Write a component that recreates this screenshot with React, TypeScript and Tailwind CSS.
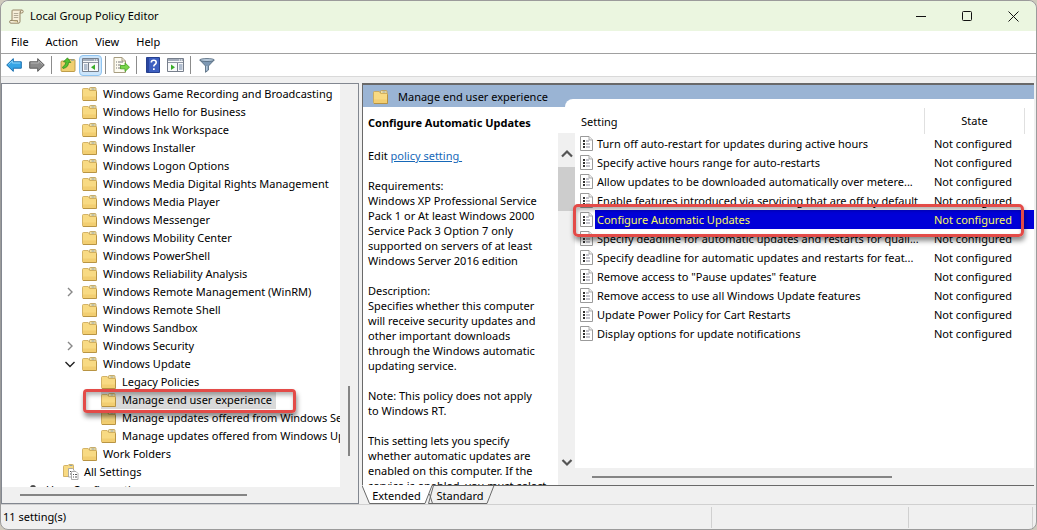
import React from 'react';

interface TreeItem {
  label: string;
  level: number;
  chevron?: 'open' | 'closed';
  icon?: 'all' | 'user';
  selected?: boolean;
}

const treeItems: TreeItem[] = [
  { label: 'Windows Game Recording and Broadcasting', level: 3 },
  { label: 'Windows Hello for Business', level: 3 },
  { label: 'Windows Ink Workspace', level: 3 },
  { label: 'Windows Installer', level: 3 },
  { label: 'Windows Logon Options', level: 3 },
  { label: 'Windows Media Digital Rights Management', level: 3 },
  { label: 'Windows Media Player', level: 3 },
  { label: 'Windows Messenger', level: 3 },
  { label: 'Windows Mobility Center', level: 3 },
  { label: 'Windows PowerShell', level: 3 },
  { label: 'Windows Reliability Analysis', level: 3 },
  { label: 'Windows Remote Management (WinRM)', level: 3, chevron: 'closed' },
  { label: 'Windows Remote Shell', level: 3 },
  { label: 'Windows Sandbox', level: 3 },
  { label: 'Windows Security', level: 3, chevron: 'closed' },
  { label: 'Windows Update', level: 3, chevron: 'open' },
  { label: 'Legacy Policies', level: 4 },
  { label: 'Manage end user experience', level: 4, selected: true },
  { label: 'Manage updates offered from Windows Server Update Service', level: 4 },
  { label: 'Manage updates offered from Windows Update', level: 4 },
  { label: 'Work Folders', level: 3 },
  { label: 'All Settings', level: 2, icon: 'all' },
  { label: 'User Configuration', level: 0, icon: 'user', chevron: 'open' },
];

const levelPadding = ['pl-[5px]', 'pl-[24px]', 'pl-[43px]', 'pl-[62px]', 'pl-[81px]'];

const settings = [
  'Turn off auto-restart for updates during active hours',
  'Specify active hours range for auto-restarts',
  'Allow updates to be downloaded automatically over metere...',
  'Enable features introduced via servicing that are off by default',
  'Configure Automatic Updates',
  'Specify deadline for automatic updates and restarts for quali...',
  'Specify deadline for automatic updates and restarts for feat...',
  'Remove access to "Pause updates" feature',
  'Remove access to use all Windows Update features',
  'Update Power Policy for Cart Restarts',
  'Display options for update notifications',
];

const FolderIcon = () => (
  <svg width="15" height="14" viewBox="0 0 15 14" className="shrink-0">
    <path d="M7.500 3.500V1.500q0-1 1-1H13q1 0 1 1V5H7.500z" fill="#f3dfa0" stroke="#b99a52" strokeWidth=".8" />
    <path d="M9.500 2h3" stroke="#8fa3ad" strokeWidth="1" />
    <path d="M.5 2.500q0-1 1-1h4.700L7.800 3.500H14q.5 0 .5.700v8.400q0 .9-1 .9h-12q-1 0-1-.9z" fill="#f8da83" stroke="#c9a452" strokeWidth=".8" />
    <path d="M1 9.500h13v3.500H1z" fill="#efc766" opacity=".6" />
    <path d="M14.500 4.500v9H1" fill="none" stroke="#b18b3a" strokeWidth=".8" />
  </svg>
);

const AllSettingsIcon = () => (
  <svg width="16" height="16" viewBox="0 0 16 16" className="shrink-0">
    <path d="M.5 2.500q0-1 1-1h3.400l1-1H9.500q1 0 1 1v11H.5z" fill="#f8da83" stroke="#c9a452" strokeWidth=".8" />
    <path d="M6.500 1.500h3" stroke="#8fa3ad" />
    <path d="M5.500 4.500h4L11 6v7H5.500z" fill="#fff" stroke="#999" strokeWidth=".8" />
    <path d="M8.500 7.500H13l2 2v6H8.500z" fill="#fff" stroke="#999" strokeWidth=".8" />
    <path d="M10 10.500h1M12 10.500h2M10 13h1M12 13h2M7 7.500h1M7 10h1" stroke="#555" />
  </svg>
);

const UserIcon = () => (
  <svg width="16" height="16" viewBox="0 0 16 16" className="shrink-0">
    <circle cx="8" cy="6" r="3" fill="#4a4a4a" />
    <path d="M1 15q1-5 7-5t6 5z" fill="#4f7fb5" />
  </svg>
);

const ScrollIcon = () => (
  <svg width="15" height="15" viewBox="0 0 15 15">
    <path d="M3.500 1h9.200q1.500 0 1.500 1.500T12.700 4H11v8.500q0 1.700-1.600 1.700H2Q.6 14.200.6 12.800T2 11.400h1V3Q3 1 3.500 1z" fill="#f6efda" stroke="#8c7c5a" strokeWidth=".9" />
    <path d="M12.500 1.300Q11 1.500 11 4" fill="none" stroke="#8c7c5a" />
    <path d="M2 11.500h6.500q-.5 2 1 2.500" fill="#e0cf9f" stroke="#8c7c5a" strokeWidth=".8" />
    <path d="M4.800 4.500h4.500M4.800 6.500h4.500M4.800 8.500h4.500" stroke="#aaa391" strokeWidth=".9" />
  </svg>
);

const PolicyIcon = () => (
  <svg width="13" height="15" viewBox="0 0 13 15" className="block">
    <path d="M.5.5H9L12.500 4v10.500H.5z" fill="#fff" stroke="#9a9a9a" />
    <path d="M9 .5V4h3.500" fill="#eee" stroke="#9a9a9a" strokeWidth=".8" />
    <path d="M3 4h2v2H3zM3 7h2v2H3zM3 10h2v2H3z" fill="#333" />
    <path d="M6 5h3M6 8h4M6 11h4" stroke="#8a8a9a" />
  </svg>
);

const ArrowIcon = ({ forward = false }: { forward?: boolean }) => (
  <svg width="16" height="14" viewBox="0 0 16 14" className={forward ? '-scale-x-100' : ''}>
    <path
      d="M.7 7 7.300.6v3.200h8v6.400h-8v3.200z"
      fill={forward ? '#8a8a8a' : '#35a5e6'}
      stroke={forward ? '#5c5c5c' : '#1b6fae'}
      strokeLinejoin="round"
    />
    <path d="M2.500 6.500 6.300 3v2h8" fill="none" stroke={forward ? '#b5b5b5' : '#8fd6fa'} />
  </svg>
);

const UpFolderIcon = () => (
  <svg width="16" height="16" viewBox="0 0 16 16">
    <path d="M1 5q0-1 1-1h5l1-1.500h6q1 0 1 1v10q0 1-1 1H2q-1 0-1-1z" fill="#f0cf72" stroke="#b8953e" strokeWidth=".9" />
    <path d="M11 3h3" stroke="#6d9bb5" />
    <path d="M3 11.500Q8.500 10.500 8.500 5.500h2.300L7.500.8 3.500 4.800l2.500.4Q5.500 8.500 2.500 10z" fill="#53c030" stroke="#2f8518" strokeWidth=".7" />
  </svg>
);

const PaneIcon = ({ right = false }: { right?: boolean }) => (
  <svg width="17" height="14" viewBox="0 0 17 14">
    <path d="M.5.5h16v13H.5z" fill="#f7f8fa" stroke="#777f8c" />
    <path d="M1 1h15v2H1z" fill="#a3acba" />
    <path d="M12 2h1M14 2h1" stroke="#fff" />
    <path d="M1 4.500h15" stroke="#9098a5" />
    {right ? (
      <>
        <path d="M10.500 5v8.500" stroke="#777f8c" />
        <path d="M12 7h3.500M12 9h3.500M12 11h3.500" stroke="#6d84a5" />
        <path d="M4 6.500 8 9.200 4 12z" fill="#38ad28" />
      </>
    ) : (
      <>
        <path d="M6.500 5v8.500" stroke="#777f8c" />
        <path d="M2 7h3.500M2 9h3.500M2 11h3.500" stroke="#6d84a5" />
        <path d="M13 6.500 9 9.200l4 2.800z" fill="#38ad28" />
      </>
    )}
  </svg>
);

const ExportIcon = () => (
  <svg width="17" height="16" viewBox="0 0 17 16">
    <path d="M1 .5h8L12.500 4v11.500H1z" fill="#fdfbf0" stroke="#a79d80" />
    <path d="M9 .5V4h3.500" fill="none" stroke="#a79d80" />
    <path d="M3 5h1M5 5h5M3 8h1M5 8h3M3 11h1M5 11h3" stroke="#76767a" />
    <path d="M7.500 8.500H12V5.800l4.500 4.400L12 14.500v-2.700H7.500z" fill="#79d64b" stroke="#43a020" strokeWidth=".8" />
  </svg>
);

const HelpIcon = () => (
  <svg width="14" height="16" viewBox="0 0 14 16">
    <path d="M.5.5h13v15H.5z" fill="#3d5fc0" stroke="#26408f" />
    <path d="M1 1h2v14H1z" fill="#2946a0" />
    <path d="M5.300 5.500q0-2.200 2.500-2.200 2.400 0 2.400 2.100 0 1.300-1.300 2.100-1.100.7-1.100 2" fill="none" stroke="#fff" strokeWidth="1.600" />
    <path d="M7 11.200h1.700v1.700H7z" fill="#fff" />
  </svg>
);

const FilterIcon = () => (
  <svg width="16" height="15" viewBox="0 0 16 15">
    <path d="M.8 2 6.500 8v6.300L9.500 12V8l5.700-6z" fill="#7d98b3" stroke="#4f6478" strokeWidth=".8" />
    <path d="M7.800 8v4.500" stroke="#c9dbea" />
    <ellipse cx="8" cy="2" rx="7.300" ry="1.500" fill="#b9cbdc" stroke="#4f6478" strokeWidth=".8" />
  </svg>
);

interface ChevronProps {
  dir: 'up' | 'down' | 'right';
  weight?: number;
  className?: string;
}

const Chevron = ({ dir, weight = 1.4, className = '' }: ChevronProps) => {
  const paths = { up: 'M1 8.500 6 3.500l5 5', down: 'M1.500 4 6 8.500 10.500 4', right: 'M4 2l4 4-4 4' };
  return (
    <svg width="12" height="12" viewBox="0 0 12 12" fill="none" stroke="currentColor" strokeWidth={weight} className={`shrink-0 ${className}`}>
      <path d={paths[dir]} />
    </svg>
  );
};

const ToolButton = ({ label, active = false, children }: { label: string; active?: boolean; children: React.ReactNode }) => (
  <button
    aria-label={label}
    className={`flex h-[21px] w-[23px] shrink-0 items-center justify-center rounded-sm border ${
      active ? 'border-[#90c4f0] bg-[#cce5fb]' : 'border-transparent'
    }`}
  >
    {children}
  </button>
);

const Separator = () => <span className="mr-1 ml-[3px] h-[18px] w-px shrink-0 bg-[#8c8c8c]" />;

const TitleBar = () => (
  <header className="flex h-[30px] shrink-0 items-center rounded-t-lg bg-[#ebf6e0] pl-2">
    <ScrollIcon />
    <h1 className="ml-[6px] flex-1">Local Group Policy Editor</h1>
    <button aria-label="Minimize" className="flex h-full w-[46px] items-center justify-center">
      <svg width="11" height="11" stroke="#111"><path d="M0 5.500h10" /></svg>
    </button>
    <button aria-label="Maximize" className="flex h-full w-[46px] items-center justify-center">
      <svg width="11" height="11" fill="none" stroke="#111"><rect x=".5" y=".5" width="9" height="9" rx="1" /></svg>
    </button>
    <button aria-label="Close" className="flex h-full w-[46px] items-center justify-center">
      <svg width="11" height="11" stroke="#111"><path d="M.5.5l10 10M10.500.5l-10 10" /></svg>
    </button>
  </header>
);

const Toolbar = () => (
  <div className="flex h-[23px] shrink-0 items-center border-b border-[#d9d9d9] bg-white pl-px">
    <ToolButton label="Back"><ArrowIcon /></ToolButton>
    <ToolButton label="Forward"><ArrowIcon forward /></ToolButton>
    <Separator />
    <ToolButton label="Up one level"><UpFolderIcon /></ToolButton>
    <ToolButton label="Show or hide console tree" active><PaneIcon /></ToolButton>
    <Separator />
    <ToolButton label="Export list"><ExportIcon /></ToolButton>
    <Separator />
    <ToolButton label="Help"><HelpIcon /></ToolButton>
    <ToolButton label="Show or hide action pane"><PaneIcon right /></ToolButton>
    <Separator />
    <ToolButton label="Filter"><FilterIcon /></ToolButton>
  </div>
);

const TreeRow = ({ item }: { item: TreeItem }) => (
  <li className={`relative flex h-[18px] shrink-0 items-center whitespace-nowrap ${levelPadding[item.level]}`}>
    <span className="flex w-[18px] shrink-0">
      {item.chevron === 'open' && <Chevron dir="down" className="text-[#222]" />}
      {item.chevron === 'closed' && <Chevron dir="right" className="text-[#888]" />}
    </span>
    <span className={`flex h-full items-center pr-1 ${item.selected ? 'bg-[#d9d9d9]' : ''}`}>
      {item.icon === 'all' ? <AllSettingsIcon /> : item.icon === 'user' ? <UserIcon /> : <FolderIcon />}
      <span className={item.icon ? 'ml-[5px]' : 'ml-[6px]'}>{item.label}</span>
    </span>
    {item.selected && (
      <span className="absolute -top-[2px] left-[81px] z-10 h-[24px] w-[213px] rounded-[4px] border-[3px] border-[#e34b48] shadow-[1px_4px_5px_rgba(0,0,0,0.45),inset_1px_3px_4px_rgba(0,0,0,0.3)]" />
    )}
  </li>
);

const TreePane = () => (
  <nav className="flex w-[358px] shrink-0 flex-col border border-[#828790] bg-[#f0f0f0]">
    <div className="flex min-h-0 flex-1">
      <ul className="min-w-0 flex-1 overflow-hidden bg-white pt-px">
        {treeItems.map((item) => (
          <TreeRow key={item.label} item={item} />
        ))}
      </ul>
      <div className="flex w-[18px] flex-col items-center pb-[31px]">
        <span className="mt-auto h-[70px] w-[2px] bg-[#858585]" />
      </div>
    </div>
    <div className="flex h-[16px] items-center pl-[18px]">
      <span className="h-[2px] w-[227px] bg-[#858585]" />
    </div>
  </nav>
);

const Description = () => (
  <section className="flex w-[212px] shrink-0 flex-col overflow-hidden bg-white">
    <div className="flex h-[26px] shrink-0 items-center pt-[6px] pl-[5px] font-bold">
      <h2>Configure Automatic Updates</h2>
    </div>
    <div className="flex min-h-0 flex-1">
      <div className="min-w-0 flex-1 overflow-hidden pt-[15px] pl-[5px] leading-[15px] whitespace-nowrap">
        <p>
          Edit <a href="#policy" className="text-[#1668b8] underline">policy setting&nbsp;</a>
        </p>
        <p className="mt-[15px]">
          Requirements:<br />
          Windows XP Professional Service<br />
          Pack 1 or At least Windows 2000<br />
          Service Pack 3 Option 7 only<br />
          supported on servers of at least<br />
          Windows Server 2016 edition
        </p>
        <p className="mt-[15px]">
          Description:<br />
          Specifies whether this computer<br />
          will receive security updates and<br />
          other important downloads<br />
          through the Windows automatic<br />
          updating service.
        </p>
        <p className="mt-[15px]">
          Note: This policy does not apply<br />
          to Windows RT.
        </p>
        <p className="mt-[15px]">
          This setting lets you specify<br />
          whether automatic updates are<br />
          enabled on this computer. If the<br />
          service is enabled, you must select
        </p>
      </div>
      <div className="flex w-[17px] shrink-0 flex-col items-center bg-[#f0f0f0] text-[#555]">
        <Chevron dir="up" weight={2.2} className="mt-[15px] mb-[7px]" />
        <span className="h-[44px] w-full bg-[#cdcdcd]" />
        <Chevron dir="down" weight={2.2} className="mt-auto mb-[17px]" />
      </div>
    </div>
  </section>
);

const SettingsTable = () => (
  <section className="-mt-[8px] flex min-w-0 flex-1 flex-col bg-[#f0f0f0]">
    <div className="min-h-0 flex-1 bg-white">
      <table className="w-full table-fixed border-collapse text-left">
        <colgroup>
          <col className="w-[20px]" />
          <col />
          <col className="w-[101px]" />
          <col className="w-[9px]" />
        </colgroup>
        <thead>
          <tr className="h-[35px]">
            <th colSpan={2} className="p-0 pt-[10px] pl-[6px] font-normal">Setting</th>
            <th className="p-0 pt-[9px] font-normal">
              <div className="flex h-[26px] items-center justify-center border-x border-[#e0e0e0]">State</div>
            </th>
            <th aria-hidden="true" />
          </tr>
        </thead>
        <tbody>
          {settings.map((name, i) => {
            const selected = i === 4;
            return (
              <tr key={name} className="relative h-[19px] whitespace-nowrap">
                <td className="p-0 pl-[5px]"><PolicyIcon /></td>
                <td className={`p-0 pl-[2px] ${selected ? 'bg-[#0000d8] text-[#f8f860]' : ''}`}>
                  {name}
                  {selected && (
                    <span className="absolute -top-[6px] right-[10px] -left-[2px] z-10 h-[33px] rounded-[5px] border-[3px] border-[#e34b48] shadow-[1px_4px_5px_rgba(0,0,0,0.45),inset_1px_3px_4px_rgba(0,0,0,0.3)]" />
                  )}
                </td>
                <td className={`p-0 pl-[10px] ${selected ? 'bg-[#0000d8] text-[#f8f860]' : ''}`}>Not configured</td>
                <td className={selected ? 'bg-[#0000d8] p-0' : 'p-0'} />
              </tr>
            );
          })}
        </tbody>
      </table>
    </div>
    <div className="flex h-[17px] shrink-0 items-center pl-[17px]">
      <span className="h-[2px] w-[300px] bg-[#858585]" />
    </div>
  </section>
);

const ViewTabs = () => (
  <div className="relative flex h-[19px] shrink-0 border-t border-[#696969] pl-[1px]">
    <svg width="134" height="19" className="absolute -top-px left-0" fill="none" stroke="#696969">
      <path d="M66.500 18.500 71.500.5H132l-7 18z" fill="#f0f0f0" />
      <path d="M0 0 7.500 18.500H63L70 0z" fill="#fff" stroke="none" />
      <path d="M0 .5 7.500 18.500H63L70 .5M67.500 9l3 9.500" />
    </svg>
    <button className="relative h-[19px] w-[67px] text-center">Extended</button>
    <button className="relative h-[19px] w-[60px] text-center">Standard</button>
  </div>
);

const ResultPane = () => (
  <main className="flex min-w-0 flex-1 flex-col">
    <div className="flex min-h-0 flex-1 flex-col border-t-2 border-l border-[#696969]">
      <div className="flex h-[22px] shrink-0 items-center bg-[#9ab4d4] pt-px pl-[10px]">
        <FolderIcon />
        <h2 className="ml-[10px] flex-1">Manage end user experience</h2>
      </div>
      <div className="relative flex min-h-0 flex-1">
        <span className="absolute -top-[8px] left-[202px] h-[8px] w-[20px] rounded-tl-[8px] bg-white" />
        <Description />
        <SettingsTable />
      </div>
    </div>
    <ViewTabs />
  </main>
);

const App: React.FC = () => (
  <div className="h-screen overflow-hidden bg-[#cfcabd] font-['Noto_Sans',sans-serif] text-[11px] leading-[16px] text-black">
    <div className="flex h-full flex-col overflow-hidden rounded-lg border border-[#9b9b9b] bg-[#f0f0f0]">
      <TitleBar />
      <div className="flex h-[23px] shrink-0 items-center gap-[17px] border-b border-[#a0a0a0] bg-white pl-[10px]">
        <button>File</button>
        <button>Action</button>
        <button>View</button>
        <button>Help</button>
      </div>
      <Toolbar />
      <div className="flex min-h-0 flex-1 gap-[3px] pt-[6px] pr-[2px]">
        <TreePane />
        <ResultPane />
      </div>
      <footer className="flex h-[25px] shrink-0 items-center border-t border-[#d0d0d0] pl-[2px]">
        <span className="flex-1">11 setting(s)</span>
        <span className="h-[21px] w-[197px] border-l border-[#d0d0d0]" />
        <span className="h-[21px] w-[125px] border-x border-[#d0d0d0]" />
        <span className="w-[3px]" />
      </footer>
    </div>
  </div>
);

export default App;
